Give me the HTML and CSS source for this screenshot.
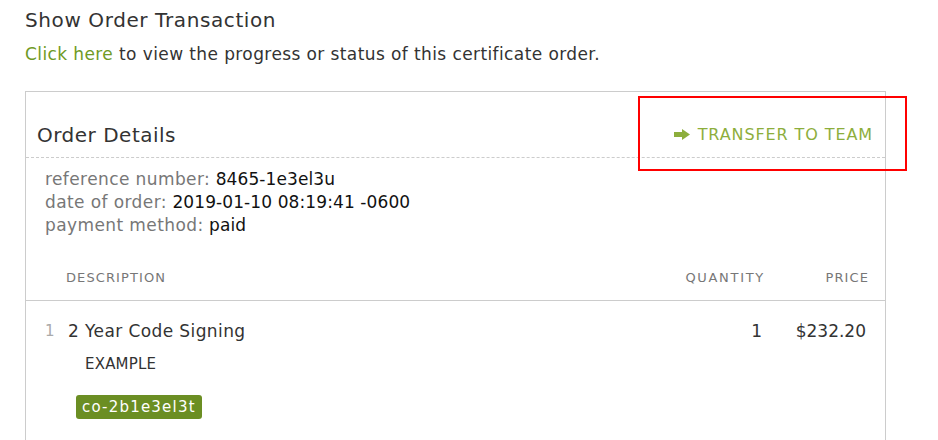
FILE: index.html
```html
<!DOCTYPE html>
<html>
<head>
<meta charset="utf-8">
<link rel="stylesheet" href="styles.css">
</head>
<body>
<div class="page">
  <h2 class="title">Show Order Transaction</h2>
  <p class="intro"><a class="link" href="#">Click here</a> to view the progress or status of this certificate order.</p>
  <div class="panel">
    <div class="panel-head">
      <h3 class="panel-title">Order Details</h3>
      <a class="transfer" href="#">
        <svg class="arrow" width="16" height="11" viewBox="0 0 16 11"><rect x="0" y="3" width="9" height="5" fill="#8dae3c"/><path d="M8 0 L16 5.5 L8 11 Z" fill="#8dae3c"/></svg>
        <span>TRANSFER TO TEAM</span>
      </a>
      <div class="highlight"></div>
    </div>
    <div class="meta">
      <div><span class="lbl">reference number:</span> 8465-1e3el3u</div>
      <div><span class="lbl">date of order:</span> 2019-01-10 08:19:41 -0600</div>
      <div><span class="lbl">payment method:</span> paid</div>
    </div>
    <div class="thead">
      <div class="th th-desc">DESCRIPTION</div>
      <div class="th th-qty">QUANTITY</div>
      <div class="th th-price">PRICE</div>
    </div>
    <div class="row">
      <div class="num">1</div>
      <div class="desc">
        <div class="product">2 Year Code Signing</div>
        <div class="sub">EXAMPLE</div>
        <span class="badge">co-2b1e3el3t</span>
      </div>
      <div class="qty">1</div>
      <div class="price">$232.20</div>
    </div>
  </div>
</div>
</body>
</html>
```
FILE: styles.css
```css
* { box-sizing: border-box; }
body {
  margin: 0;
  background: #fff;
  font-family: "DejaVu Sans", sans-serif;
  color: #333;
}
.page { padding: 8px 0 0 25px; width: 886px; }
.title {
  margin: 0;
  font-size: 20px;
  font-weight: 500;
  letter-spacing: 0.6px;
  line-height: 24px;
  color: #333;
}
.intro {
  margin: 10px 0 0 0;
  font-size: 17px;
  letter-spacing: 0.4px;
  line-height: 24px;
  color: #333;
}
.link { color: #6f9a25; text-decoration: none; }
.panel {
  margin-top: 25px;
  border: 1px solid #ccc;
  border-bottom: none;
  height: 360px;
}
.panel-head {
  position: relative;
  display: flex;
  justify-content: space-between;
  align-items: center;
  height: 66px;
  padding: 20px 12px 0 11px;
  border-bottom: 1px dashed #ccc;
}
.panel-title {
  margin: 0;
  font-size: 20px;
  font-weight: 500;
  letter-spacing: 0.5px;
  color: #333;
}
.transfer {
  display: flex;
  align-items: center;
  gap: 8px;
  color: #8dae3c;
  text-decoration: none;
  font-size: 16px;
  letter-spacing: 0.9px;
}
.highlight {
  position: absolute;
  left: 612px;
  top: 4px;
  width: 269px;
  height: 75px;
  border: 2px solid #f00;
}
.meta {
  padding: 10px 0 0 19px;
  font-size: 17px;
  letter-spacing: 0.1px;
  line-height: 23px;
  color: #111;
}
.lbl { color: #777; letter-spacing: 0.4px; }
.thead {
  display: flex;
  align-items: flex-end;
  height: 64px;
  padding-bottom: 14px;
  border-bottom: 1px solid #ccc;
  font-size: 13px;
  line-height: 16px;
  letter-spacing: 1.1px;
  color: #777;
}
.th-desc { padding-left: 40px; flex: 1; }
.th-qty { text-align: right; letter-spacing: 1.7px; }
.th-price { width: 120px; text-align: right; padding-right: 16px; }
.row {
  display: flex;
  padding-top: 19px;
}
.num { width: 42px; padding-left: 19px; color: #aaa; font-size: 15px; line-height: 22px; }
.desc { flex: 1; }
.product { font-size: 17px; letter-spacing: 0.4px; line-height: 22px; color: #333; }
.sub { margin: 12px 0 0 17px; font-size: 15px; letter-spacing: 0.2px; line-height: 20px; color: #333; }
.badge {
  display: inline-block;
  margin: 21px 0 0 8px;
  padding: 2px 6px;
  background: #6b8e23;
  color: #fff;
  border-radius: 3px;
  font-size: 15px;
  letter-spacing: 1.2px;
  line-height: 20px;
}
.qty { text-align: right; padding-right: 3px; font-size: 17px; line-height: 22px; }
.price { width: 120px; text-align: right; padding-right: 19px; font-size: 17px; line-height: 22px; }
```
